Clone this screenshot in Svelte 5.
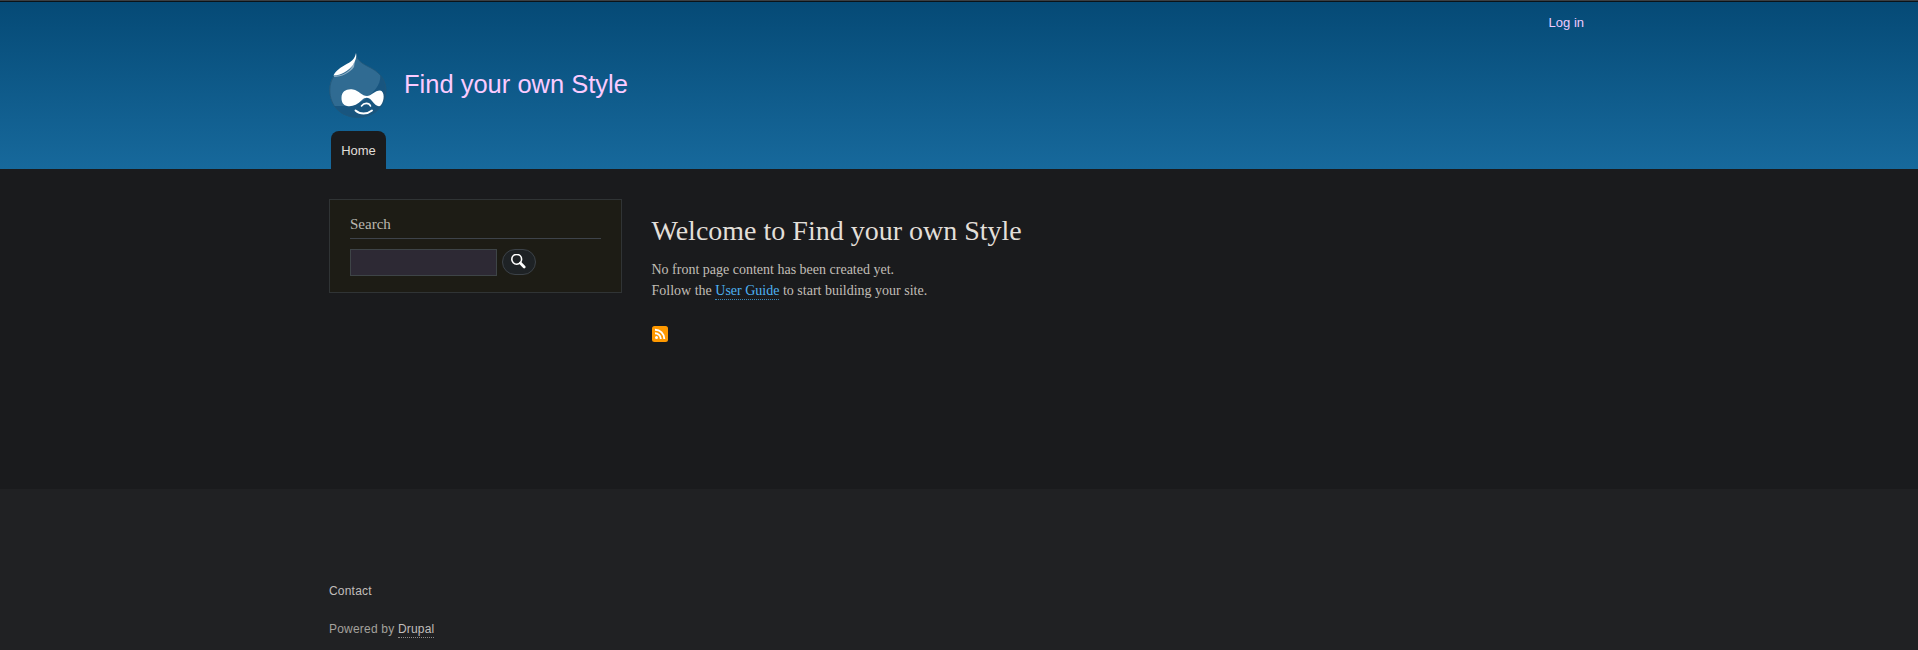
<script>
  const siteName = 'Find your own Style';
  let query = $state('');
</script>

<div class="page">
  <header>
    <div class="wrap">
      <div class="account"><a href="#login">Log in</a></div>
      <div class="branding">
        <svg class="logo" width="58" height="66" viewBox="0 0 58 66">
          <defs>
            <clipPath id="drop"><path d="M27 0C28 8 34 11 42 15C53 21 57.300 29 57.300 37C57.300 54 44 64.700 29 64.700C12 64.700 .5 53 .5 37C.5 25 7 18 15 13C23 9 26 6 27 0Z" /></clipPath>
          </defs>
          <g clip-path="url(#drop)">
            <rect width="58" height="66" fill="#18557f" />
            <path d="M0 0H48L51 18C53 30 47 36 41 42C36 47 29 52 15 53H0Z" fill="#306b92" />
          </g>
          <path d="M27 1C28 8 34 11 42 15C53 21 56.900 29 56.900 37C56.900 54 44 64.300 29 64.300C12 64.300 .8 53 .8 37C.8 31 2.500 27 5 23" fill="none" stroke="#215778" stroke-width=".8" />
          <path d="M26 7C24 14 19 20 12 22C7 23 5 22 5 24C12 24 21 20 25 14Z" fill="#8fb0c6" />
          <path d="M27 0C26 6 22 9 16 12C9 16 6 19 4.500 22.500C12 22.500 19 18 24 12C26 8 28 5 27 0Z" fill="#fff" />
          <path d="M12.500 45C12.500 38 18 35.500 24 36.500C30 37.500 33 43 38 43C42 43 46 37.500 51 37.500C56 38 55.500 48 52 52C50 55 46 52 43 48C40 44 36 44 33 47C28 52 23 54 18 53C14 52 12.500 49 12.500 45Z" fill="#fff" />
          <path d="M32.500 53C35 49.500 40 49.500 41.500 53" fill="none" stroke="#fff" stroke-width="1.600" stroke-linecap="round" />
          <path d="M26.500 57.500C31 61.500 38 61.500 43 57.500" fill="none" stroke="#fff" stroke-width="1.900" stroke-linecap="round" />
        </svg>
        <a class="site-name" href="#home">{siteName}</a>
      </div>
      <nav><a href="#home">Home</a></nav>
    </div>
  </header>

  <main class="wrap">
    <aside>
      <h2>Search</h2>
      <form>
        <input type="text" aria-label="Search" bind:value={query} />
        <button type="button" aria-label="Submit search">
          <svg width="16" height="16" viewBox="0 0 16 16">
            <circle cx="5.700" cy="5.300" r="4.900" fill="none" stroke="#fff" stroke-width="1.600" />
            <path d="M9.300 9L13.200 12.900" stroke="#fff" stroke-width="2.800" stroke-linecap="round" />
          </svg>
        </button>
      </form>
    </aside>
    <section>
      <h1>Welcome to {siteName}</h1>
      <p>No front page content has been created yet.<br />Follow the <a href="#guide">User Guide</a> to start building your site.</p>
      <svg class="feed" width="16" height="16" viewBox="0 0 16 16">
        <rect width="16" height="16" rx="2.500" fill="#ff9900" />
        <circle cx="4.500" cy="11.500" r="1.500" fill="#fff" />
        <path d="M3 7.200A5.800 5.800 0 0 1 8.800 13M3 3.700A9.300 9.300 0 0 1 12.300 13" fill="none" stroke="#fff" stroke-width="1.900" />
      </svg>
    </section>
  </main>

  <footer>
    <div class="wrap">
      <div class="contact"><a href="#contact">Contact</a></div>
      <div class="powered">Powered by <a href="#drupal">Drupal</a></div>
    </div>
  </footer>
</div>

<style>
  :global(body) { margin: 0; background: #202123; }
  * { box-sizing: border-box; }
  a { text-decoration: none; }
  .page {
    height: 650px;
    display: flex;
    flex-direction: column;
    overflow: hidden;
    background: #1a1b1d;
    font: 14px/21px "Liberation Serif", serif;
    color: #c1beb7;
  }
  .wrap { width: 1260px; margin: 0 auto; }
  header {
    height: 169px;
    flex: none;
    border-top: 1px solid #3b3f43;
    background: linear-gradient(#0b1319 0 1px, #054a76 1px, #17699c 100%);
    font-family: "Nimbus Sans", "Liberation Sans", sans-serif;
  }
  .account { height: 52px; padding: 11px 5px 0 0; text-align: right; font-size: 13px; }
  .account a { color: #efcaff; }
  .branding { display: flex; height: 78px; }
  .logo { display: block; flex: none; }
  .site-name { margin: 15px 0 0 17px; font-size: 25.5px; line-height: 32px; color: #fbcbff; }
  nav { display: flex; padding-left: 2px; }
  nav a {
    width: 55px;
    height: 38px;
    border-radius: 8px 8px 0 0;
    background: #1a1b1d;
    color: #e0ded9;
    font-size: 13px;
    line-height: 40px;
    text-align: center;
  }
  main { display: flex; gap: 29.5px; height: 320px; flex: none; padding-top: 30px; }
  aside { width: 293px; height: 94px; padding: 14px 20px; border: 1px solid #303435; background: #1d1c15; }
  h2 { height: 25px; margin: 0 0 10px; border-bottom: 1px solid #3e434a; font-size: 15px; line-height: 21px; font-weight: 400; color: #bbb8b0; }
  form { display: flex; gap: 5px; }
  input { width: 147px; height: 27px; margin: 0; border: 1px solid #3e4447; border-radius: 0; background: #2d2934; color: #e8e6e3; outline: 0; }
  button { display: flex; width: 34px; height: 26px; margin: 0; padding: 4px 0 0 8px; border: 1px solid #3c4248; border-radius: 13px; background: #1e2225; }
  h1 { margin: 15px 0 12px; font-size: 28px; line-height: 33px; font-weight: 400; color: #e2dfd9; }
  p { margin: 0; }
  p a { padding-bottom: 1px; color: #4eb2f3; border-bottom: 1px dotted #3b86b5; }
  .feed { display: block; margin-top: 25px; }
  footer {
    flex: 1;
    padding-top: 92px;
    background: #202123;
    font: 12px/21px "Nimbus Sans", "Liberation Sans", sans-serif;
    letter-spacing: .2px;
    color: #a4a29d;
  }
  footer a { color: #c0bebb; }
  .powered { margin-top: 17px; }
  .powered a { padding-bottom: 1px; border-bottom: 1px dotted #8b8987; }
</style>
